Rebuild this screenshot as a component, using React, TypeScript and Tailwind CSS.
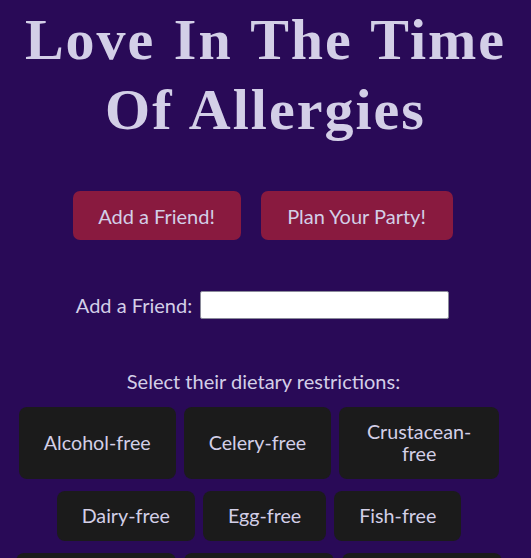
import React from "react";

const chips = [
  "Alcohol-free",
  "Celery-free",
  "Crustacean-free",
  "Dairy-free",
  "Egg-free",
  "Fish-free",
  "FODMAP-free",
  "Gluten-free",
  "Immuno-Supportive",
];

export default function App() {
  return (
    <div className="min-h-screen bg-[#290a57] text-[#d3cfe7]" style={{ fontFamily: "Lato, 'Noto Sans', sans-serif" }}>
      <h1
        className="pt-[5px] text-center text-[58px] leading-[70px] font-bold tracking-[2px] [word-spacing:2px]"
        style={{ fontFamily: "'Liberation Serif', 'DejaVu Serif', serif" }}
      >
        Love In The Time
        <br />
        Of Allergies
      </h1>
      <div className="mt-[46px] flex justify-center gap-[20px] pr-[6px]">
        <button className="h-[49px] w-[168px] rounded-[7px] bg-[#891a3f] text-[20px] text-[#d3cfe7]">Add a Friend!</button>
        <button className="h-[49px] w-[192px] rounded-[7px] bg-[#891a3f] text-[20px] text-[#d3cfe7]">Plan Your Party!</button>
      </div>
      <div className="mt-[50px] flex items-center justify-center gap-[8px] pr-[6px]">
        <label className="text-[20px]">Add a Friend:</label>
        <input className="h-[28px] w-[249px] rounded-[2px] border border-[#8a8a9a] bg-white" />
      </div>
      <p className="mt-[49px] pr-[4px] text-center text-[20px] leading-[24px]">Select their dietary restrictions:</p>
      <div className="ml-[12px] mt-[14px] flex w-[494px] flex-wrap justify-center gap-x-[8px] gap-y-[12px]">
        {chips.map((c) => (
          <div
            key={c}
            className="flex max-w-[160px] items-center justify-center rounded-[8px] bg-[#1b1b1b] px-[25px] py-[13.5px] text-center text-[19.7px] leading-[22.5px]"
          >
            {c}
          </div>
        ))}
      </div>
    </div>
  );
}
